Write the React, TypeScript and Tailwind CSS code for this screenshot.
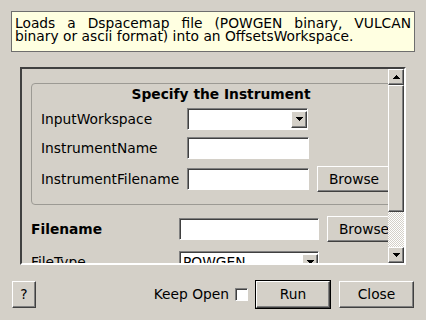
const raised =
  "border border-t-white border-l-white border-r-[#404040] border-b-[#404040] shadow-[inset_-1px_-1px_0_#808080]";
const sunken =
  "border border-t-[#808080] border-l-[#808080] border-r-white border-b-white shadow-[inset_1px_1px_0_#404040]";

function Arrow({ up }: { up?: boolean }) {
  return (
    <svg width="7" height="4" viewBox="0 0 7 4" shapeRendering="crispEdges">
      <path d={up ? "M3.5 0 L7 4 L0 4 Z" : "M0 0 L7 0 L3.5 4 Z"} fill="#000" />
    </svg>
  );
}

function Field({ w }: { w: string }) {
  return <div className={`h-[22px] bg-white ${sunken} ${w}`} />;
}

function Combo({ w, value }: { w: string; value?: string }) {
  return (
    <div className={`flex h-[22px] items-center bg-white ${sunken} ${w}`}>
      <span className="flex-1 overflow-hidden pl-[3px] leading-[16px]">{value}</span>
      <div className={`flex h-[17px] w-[16px] items-center justify-center bg-[#d4d0c8] ${raised}`}>
        <Arrow />
      </div>
    </div>
  );
}

function Button({ label, w, h = "h-[26px]" }: { label: string; w: string; h?: string }) {
  return (
    <div className={`flex shrink-0 items-center justify-center bg-[#d4d0c8] ${raised} ${w} ${h}`}>
      {label}
    </div>
  );
}

export default function App() {
  return (
    <div className="flex h-[320px] w-[426px] flex-col overflow-hidden bg-[#d4d0c8] font-['DejaVu_Sans',sans-serif] text-[13.8px] text-black">
      {/* description */}
      <div className="mx-[11px] mt-[11px] h-[41px] border border-[#6e6e6e] bg-[#ffffe1] px-[3px] pt-[5px] text-justify leading-[13px]">
        Loads a Dspacemap file (POWGEN binary, VULCAN binary or ascii format) into an OffsetsWorkspace.
      </div>

      {/* scroll area */}
      <div className="ml-[20px] mt-[15px] flex h-[198px] w-[386px] border-2 border-t-[#404040] border-l-[#404040] border-r-white border-b-white">
        <div className="w-[366px] overflow-hidden">
          <div className="w-[400px]">
            <div className="ml-[9px] mt-[14px] h-[122px] w-[380px] rounded-[4px] border border-[#9c9a94]">
              <div className="pt-[2px] text-center font-bold leading-[16px]">Specify the Instrument</div>
              <div className="mt-[6px] flex flex-col gap-[7px] pl-[9px]">
                <div className="flex h-[22px] items-center">
                  <span className="w-[146px]">InputWorkspace</span>
                  <Combo w="w-[121px]" />
                </div>
                <div className="flex h-[22px] items-center">
                  <span className="w-[146px]">InstrumentName</span>
                  <Field w="w-[122px]" />
                </div>
                <div className="flex h-[26px] items-center">
                  <span className="w-[146px]">InstrumentFilename</span>
                  <Field w="w-[122px]" />
                  <div className="ml-[8px]">
                    <Button label="Browse" w="w-[74px]" />
                  </div>
                </div>
              </div>
            </div>

            <div className="ml-[9px] mt-[11px] flex h-[26px] items-center">
              <span className="w-[148px] font-bold">Filename</span>
              <Field w="w-[140px]" />
              <div className="ml-[8px]">
                <Button label="Browse" w="w-[74px]" />
              </div>
            </div>
            <div className="ml-[9px] mt-[9px] flex h-[22px] items-center">
              <span className="w-[148px]">FileType</span>
              <Combo w="w-[140px]" value="POWGEN" />
            </div>
          </div>
        </div>

        {/* scrollbar */}
        <div className="flex w-[16px] flex-col">
          <div className={`flex h-[16px] items-center justify-center ${raised}`}>
            <Arrow up />
          </div>
          <div className={`h-[127px] ${raised}`} />
          <div className="flex-1 bg-[repeating-conic-gradient(#ffffff_0_25%,#d4d0c8_0_50%)] bg-[length:2px_2px]" />
          <div className={`flex h-[16px] items-center justify-center ${raised}`}>
            <Arrow />
          </div>
        </div>
      </div>

      {/* bottom buttons */}
      <div className="mt-[15px] flex h-[29px] items-center px-[12px]">
        <Button label="?" w="w-[24px]" h="h-[27px]" />
        <div className="ml-auto flex items-center">
          <span>Keep Open</span>
          <div className={`ml-[6px] h-[13px] w-[13px] bg-white ${sunken}`} />
          <div className="ml-[7px] h-[29px] w-[76px] border border-black">
            <div className={`flex h-full w-full items-center justify-center ${raised}`}>Run</div>
          </div>
          <div className="ml-[8px]">
            <Button label="Close" w="w-[75px]" h="h-[27px]" />
          </div>
        </div>
      </div>
    </div>
  );
}
